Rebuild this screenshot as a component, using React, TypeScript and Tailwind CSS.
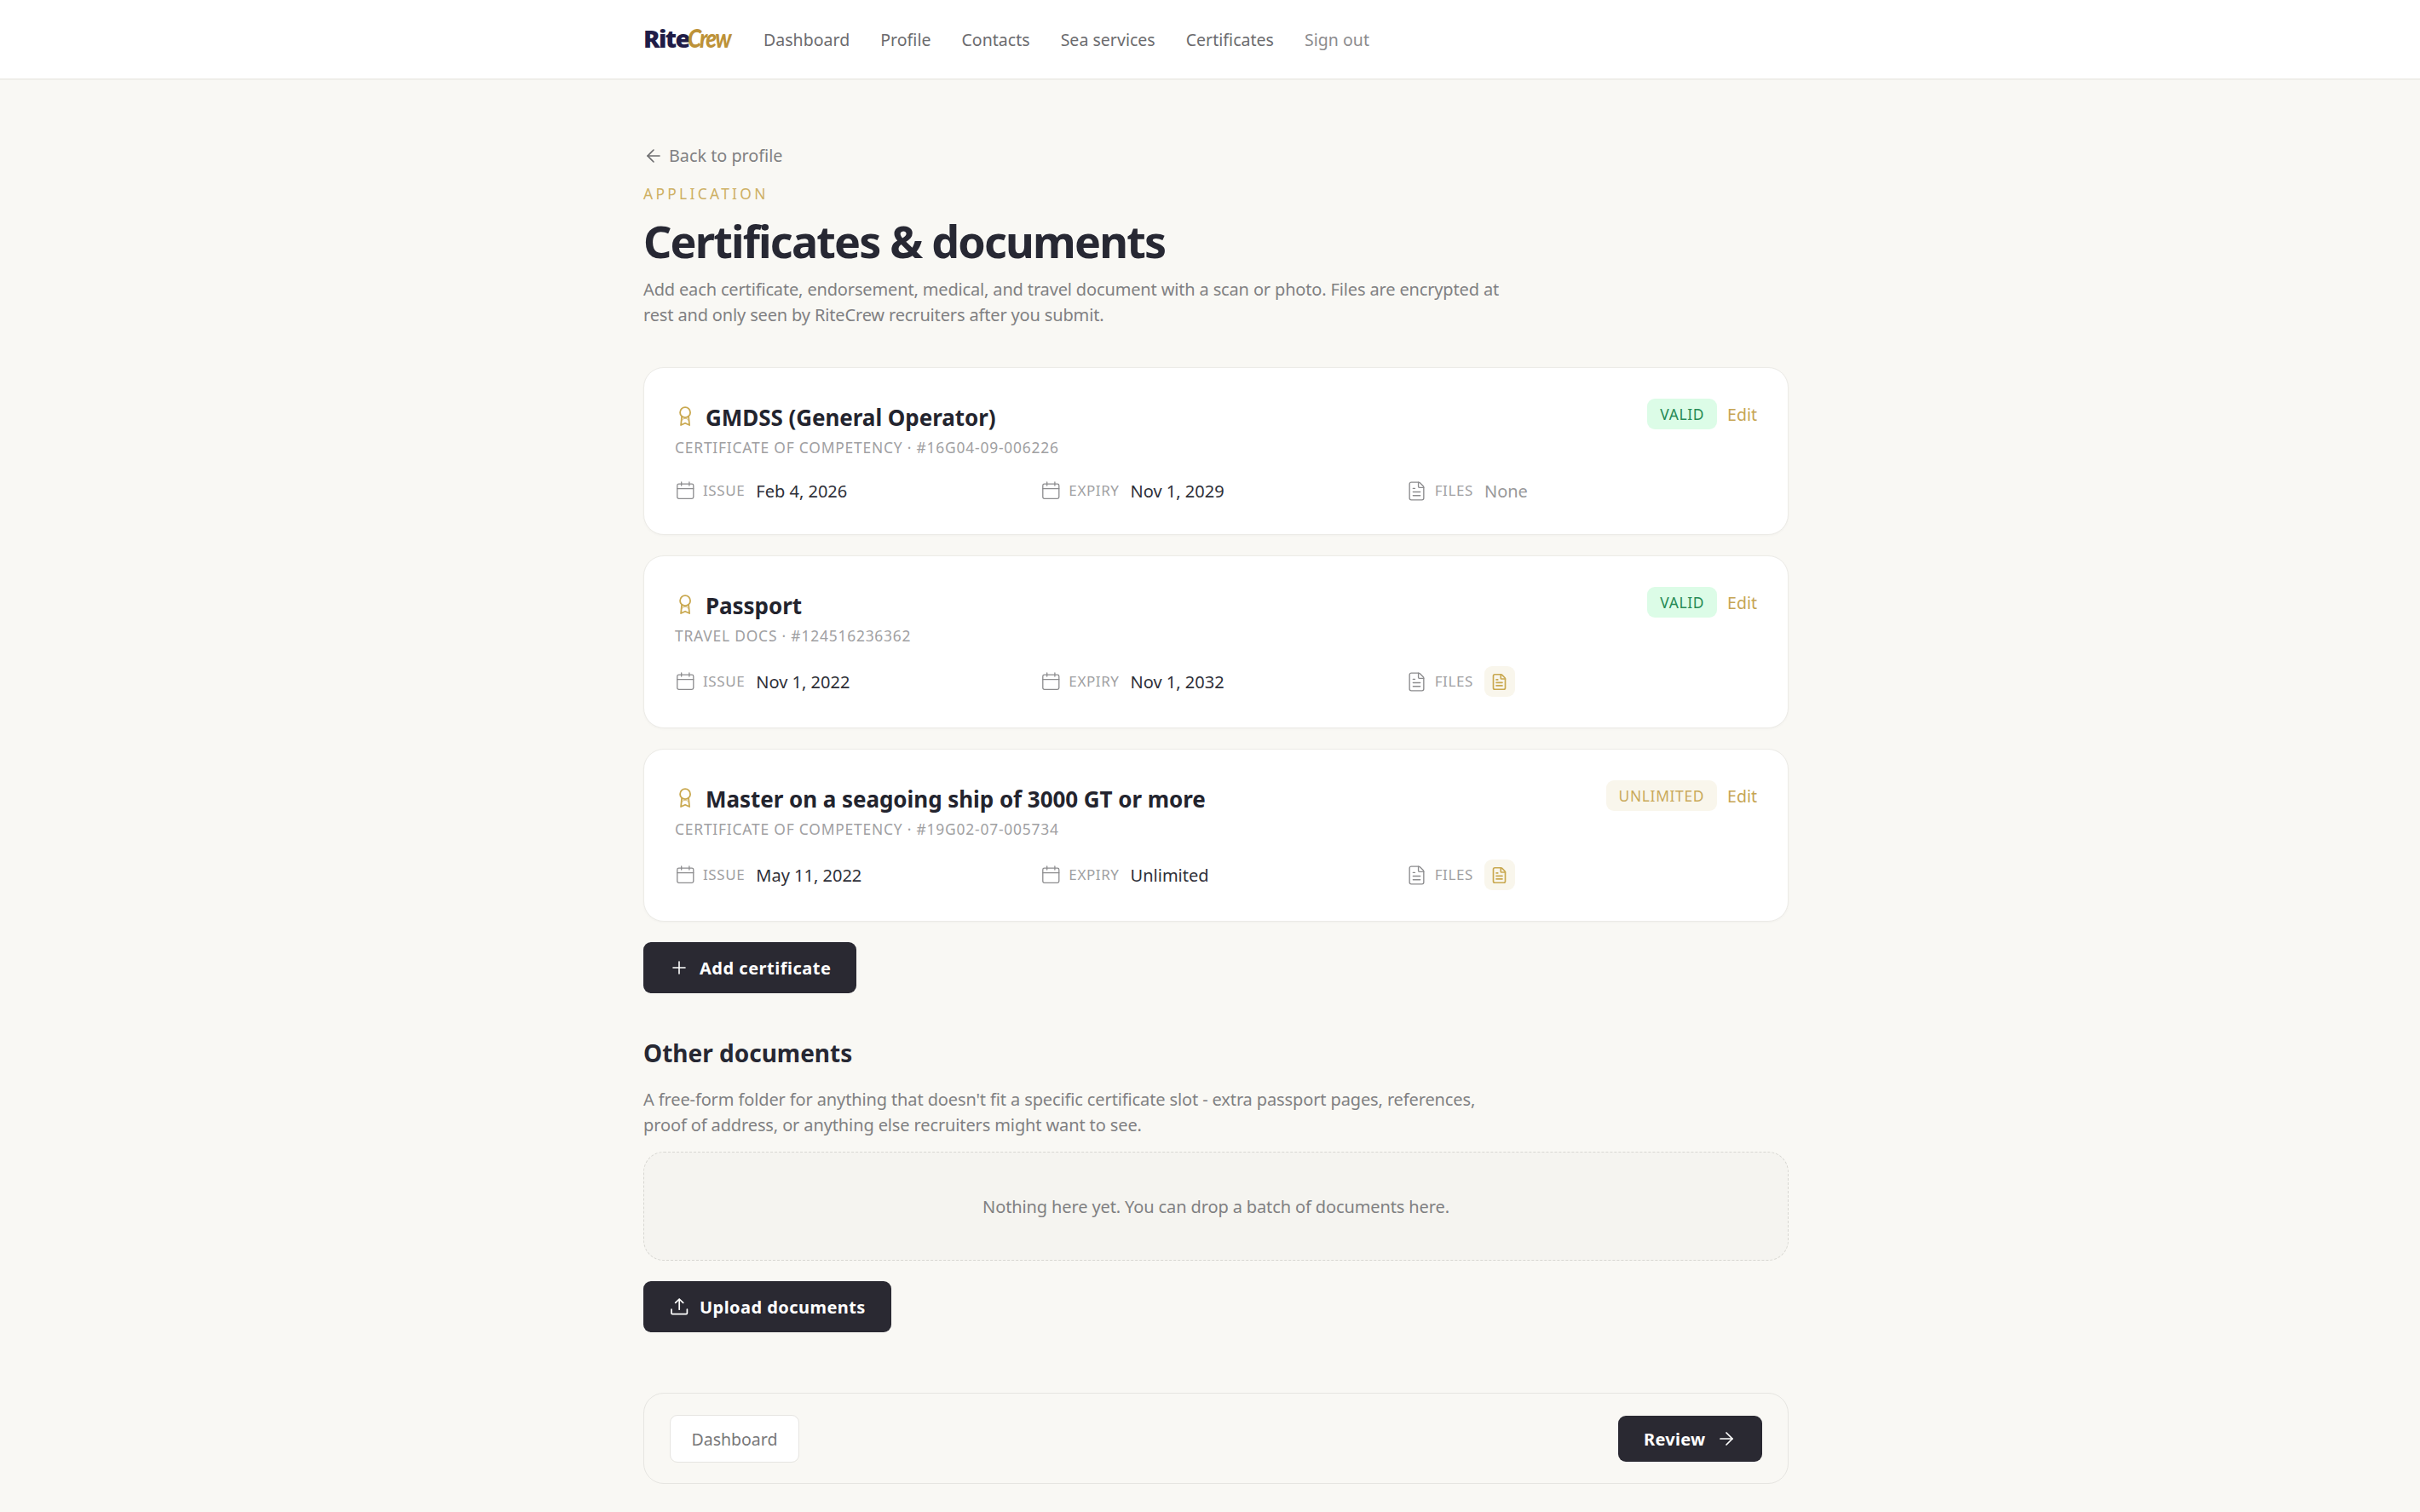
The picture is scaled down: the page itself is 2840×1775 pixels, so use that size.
import React from 'react';
import { ArrowLeft, ArrowRight, FileText, Plus } from 'lucide-react';

type Certificate = {
    title: string;
    meta: string;
    issue: string;
    expiry: string;
    status: 'VALID' | 'UNLIMITED';
    hasFile: boolean;
};

const navLinks = ['Dashboard', 'Profile', 'Contacts', 'Sea services', 'Certificates'];

const certificates: Certificate[] = [
    {
        title: 'GMDSS (General Operator)',
        meta: 'CERTIFICATE OF COMPETENCY · #16G04-09-006226',
        issue: 'Feb 4, 2026',
        expiry: 'Nov 1, 2029',
        status: 'VALID',
        hasFile: false,
    },
    {
        title: 'Passport',
        meta: 'TRAVEL DOCS · #124516236362',
        issue: 'Nov 1, 2022',
        expiry: 'Nov 1, 2032',
        status: 'VALID',
        hasFile: true,
    },
    {
        title: 'Master on a seagoing ship of 3000 GT or more',
        meta: 'CERTIFICATE OF COMPETENCY · #19G02-07-005734',
        issue: 'May 11, 2022',
        expiry: 'Unlimited',
        status: 'UNLIMITED',
        hasFile: true,
    },
];

function Icon({ className, strokeWidth = 1.4, children }: { className?: string; strokeWidth?: number; children: React.ReactNode }) {
    return (
        <svg
            viewBox="0 0 24 24"
            fill="none"
            stroke="currentColor"
            strokeWidth={strokeWidth}
            strokeLinecap="round"
            strokeLinejoin="round"
            className={`size-6 shrink-0 ${className ?? ''}`}
        >
            {children}
        </svg>
    );
}

function MedalIcon() {
    return (
        <Icon className="text-[#c9a84f]" strokeWidth={1.8}>
            <circle cx="12.1" cy="7.2" r="6" />
            <path d="M8.1 12.2 7.1 22l5-2.3 5 2.3-1-9.8" />
            <path d="M8 16.6c1.2-1.6 2.5-2.3 4.1-2.3s2.9.7 4.1 2.3" strokeWidth={0.8} />
        </Icon>
    );
}

function CalendarIcon() {
    return (
        <Icon className="text-[#8c8c8e]" strokeWidth={1.3}>
            <rect x="2.8" y="4.2" width="19" height="17.2" rx="1.8" />
            <path d="M2.8 9.6h19M7.7 1.9v4.2M16.9 1.9v4.2" />
        </Icon>
    );
}

function UploadIcon() {
    return (
        <Icon strokeWidth={1.7}>
            <path d="M3 15.2v4.4a1 1 0 0 0 1 1h16.4a1 1 0 0 0 1-1v-4.4" />
            <path d="M12.2 15.2V3M7.7 7.4 12.2 3l4.5 4.4" />
        </Icon>
    );
}

function Header() {
    return (
        <header className="h-[94px] bg-white border-b-2 border-[#efeee9]">
            <div className="w-[1344px] h-full mx-auto relative left-[7px] flex items-center">
                {/* Logo */}
                <div className="w-[141px] pb-1 flex items-baseline leading-none">
                    <span className="w-[52px] font-['Open_Sans'] text-[29px] font-extrabold tracking-[-1.6px] text-[#1f1c47]">Rite</span>
                    <span className="origin-left scale-x-[0.87] font-['Lato'] text-[30px] font-black italic tracking-[-2.2px] text-[#bd9238]">Crew</span>
                </div>
                <nav className="flex gap-[36px] pt-px text-[19.5px] tracking-[0.03px] text-[#6b6b6e]">
                    {navLinks.map(link => (
                        <a key={link} href="#">{link}</a>
                    ))}
                    <a href="#" className="text-[#8c8c8e]">Sign out</a>
                </nav>
            </div>
        </header>
    );
}

function Field({ icon, label, children }: { icon: React.ReactNode; label: string; children: React.ReactNode }) {
    return (
        <div className="h-full flex items-center">
            {icon}
            <span className="ml-[9px] text-[17px] tracking-[0.6px] text-[#a0a0a2]">{label}</span>
            <span className="ml-[13px]">{children}</span>
        </div>
    );
}

function CertificateCard({ cert }: { cert: Certificate }) {
    return (
        <article className="rounded-[24px] border border-[#ecebe7] bg-white p-[36px] shadow-[0_1px_3px_rgba(0,0,0,0.03)]">
            <div className="flex justify-between items-start">
                <div>
                    <h2 className="flex items-center gap-3 h-[42px] text-[26px] tracking-[-0.05px] font-bold text-[#23242e]">
                        <MedalIcon />
                        <span className="pt-[2px]">{cert.title}</span>
                    </h2>
                    <p className="mt-[2px] h-[28px] leading-[27px] text-[17.4px] tracking-[0.8px] text-[#a0a0a2]">
                        {cert.meta}
                    </p>
                </div>
                {/* Status & Edit */}
                <div className="flex items-center gap-3">
                    <span
                        className={`h-9 px-[15px] flex items-center rounded-[9px] text-[17.4px] tracking-[0.65px] ${
                            cert.status === 'VALID' ? 'bg-[#dcfce7] text-[#268a55]' : 'bg-[#f9f6ec] text-[#c9a95a]'
                        }`}
                    >
                        {cert.status}
                    </span>
                    <a href="#" className="pt-[2px] text-[19.5px] text-[#c6a553]">Edit</a>
                </div>
            </div>
            <div className="mt-[21px] grid grid-cols-3 gap-[18px] min-h-[30px] text-[20px] text-[#2e2f38]">
                <Field icon={<CalendarIcon />} label="ISSUE">
                    <span className="block pt-px -mb-px">{cert.issue}</span>
                </Field>
                <Field icon={<CalendarIcon />} label="EXPIRY">
                    <span className="block pt-px -mb-px">{cert.expiry}</span>
                </Field>
                <Field icon={<FileText size={25} strokeWidth={1.3} className="-mx-[0.5px] text-[#8c8c8e]" />} label="FILES">
                    {cert.hasFile ? (
                        <span className="size-9 flex items-center justify-center rounded-[9px] bg-[#f9f6ec]">
                            <FileText size={21} strokeWidth={1.9} className="text-[#c9a84f]" />
                        </span>
                    ) : (
                        <span className="block pt-px -mb-px text-[#98989a]">None</span>
                    )}
                </Field>
            </div>
        </article>
    );
}

function App() {
    return (
        <div className="h-[1775px] overflow-hidden bg-[#f9f8f4] font-['Noto_Sans',sans-serif] leading-[30px]">
            <Header />
            <main className="w-[1344px] mx-auto relative left-[7px] pt-[74px]">
                {/* Page heading */}
                <a href="#" className="flex items-center gap-[6px] h-[30px] text-[19.8px] text-[#808082]">
                    <ArrowLeft size={24} strokeWidth={1.6} className="text-[#6c6c6e]" />
                    Back to profile
                </a>
                <p className="mt-[14px] h-[30px] text-[17.4px] tracking-[3.3px] text-[#ceb063]">APPLICATION</p>
                <h1 className="mt-[8px] h-[66px] leading-[66px] text-[52px] font-bold tracking-[-1.8px] text-[#272833]">
                    Certificates &amp; documents
                </h1>
                <p className="mt-[9px] w-[1020px] text-[20px] tracking-[-0.15px] text-[#808082]">
                    Add each certificate, endorsement, medical, and travel document with a scan or photo. Files are encrypted at
                    <br />
                    rest and only seen by RiteCrew recruiters after you submit.
                </p>

                {/* Certificates */}
                <section className="mt-[46px] flex flex-col gap-6 items-stretch">
                    {certificates.map(cert => (
                        <CertificateCard key={cert.title} cert={cert} />
                    ))}
                </section>
                <button className="mt-6 w-[250px] h-[60px] pl-[30px] flex items-center gap-3 rounded-[9px] bg-[#2a2932] text-[20px] tracking-[0.5px] font-bold text-white">
                    <Plus size={24} strokeWidth={1.6} />
                    <span className="pt-[2px]">Add certificate</span>
                </button>

                {/* Other documents */}
                <h2 className="mt-[48px] h-[44px] leading-[45px] text-[28px] font-bold text-[#272833]">Other documents</h2>
                <p className="mt-[18px] text-[20px] tracking-[-0.12px] text-[#808082]">
                    A free-form folder for anything that doesn't fit a specific certificate slot - extra passport pages, references,
                    <br />
                    proof of address, or anything else recruiters might want to see.
                </p>
                <div className="mt-[16px] h-[128px] pt-[2px] flex items-center justify-center rounded-[24px] border border-dashed border-[#d8d7d2] bg-[#f5f4f0] text-[20px] tracking-[-0.12px] text-[#808082]">
                    Nothing here yet. You can drop a batch of documents here.
                </div>
                <button className="mt-6 w-[291px] h-[60px] pl-[30px] flex items-center gap-3 rounded-[9px] bg-[#2a2932] text-[20px] tracking-[0.45px] font-bold text-white">
                    <UploadIcon />
                    <span className="pt-[2px]">Upload documents</span>
                </button>

                {/* Footer actions */}
                <div className="mt-[71px] h-[107px] px-[30px] flex items-center justify-between rounded-[24px] border border-[#e6e5e1]">
                    <button className="w-[152px] h-[56px] pt-[2px] rounded-[9px] border border-[#e6e5e1] bg-white text-[19.5px] text-[#777779]">
                        Dashboard
                    </button>
                    <button className="w-[169px] h-[54px] pl-[30px] flex items-center gap-3 rounded-[9px] bg-[#2a2932] text-[20px] tracking-[0.3px] font-bold text-white">
                        <span className="pt-[2px]">Review</span>
                        <ArrowRight size={24} strokeWidth={1.7} />
                    </button>
                </div>
            </main>
        </div>
    );
}

export default App;
